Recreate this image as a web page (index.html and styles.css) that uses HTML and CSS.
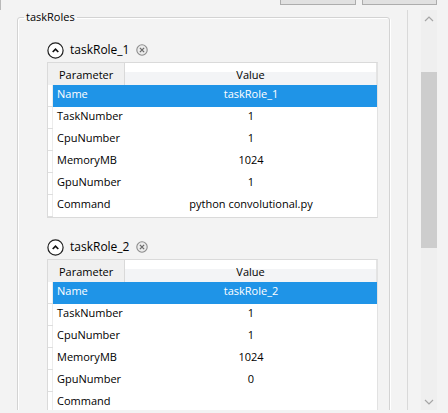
FILE: index.html
```html
<!DOCTYPE html>
<html>
<head>
<meta charset="utf-8">
<link rel="stylesheet" href="styles.css">
</head>
<body>
<div class="window">
  <div class="toolbar">
    <div class="btns">
      <button class="btn btn-import" aria-label="Import"></button>
      <button class="btn btn-export" aria-label="Export"></button>
    </div>
  </div>
  <div class="main">
    <div class="viewport">
      <fieldset class="group">
        <legend class="group-title">taskRoles</legend>

        <section class="role">
          <div class="role-head">
            <svg class="collapse" width="17" height="17" viewBox="0 0 17 17"><circle cx="8.5" cy="8.5" r="7.6" fill="#fff" stroke="#1e1e1e" stroke-width="1.2"/><path d="M5.7 10 L8.5 7.2 L11.3 10" fill="none" stroke="#111" stroke-width="1.7"/></svg>
            <span class="role-name">taskRole_1</span>
            <svg class="remove" width="12" height="12" viewBox="0 0 12 12"><circle cx="6" cy="6" r="5.2" fill="#ececec" stroke="#8c8c8c" stroke-width="1.1"/><path d="M3.9 3.9 L8.1 8.1 M8.1 3.9 L3.9 8.1" stroke="#6a6a6a" stroke-width="1.3"/></svg>
          </div>
          <table class="grid">
            <colgroup><col class="c-rh"><col class="c-param"><col class="c-value"></colgroup>
            <thead>
              <tr><th class="h-param" colspan="2">Parameter</th><th class="h-value">Value</th></tr>
            </thead>
            <tbody>
              <tr class="selected"><td class="rh"></td><td class="param">Name</td><td class="value">taskRole_1</td></tr>
              <tr><td class="rh"></td><td class="param">TaskNumber</td><td class="value">1</td></tr>
              <tr><td class="rh"></td><td class="param">CpuNumber</td><td class="value">1</td></tr>
              <tr><td class="rh"></td><td class="param">MemoryMB</td><td class="value">1024</td></tr>
              <tr><td class="rh"></td><td class="param">GpuNumber</td><td class="value">1</td></tr>
              <tr><td class="rh"></td><td class="param">Command</td><td class="value">python convolutional.py</td></tr>
            </tbody>
          </table>
        </section>

        <section class="role">
          <div class="role-head">
            <svg class="collapse" width="17" height="17" viewBox="0 0 17 17"><circle cx="8.5" cy="8.5" r="7.6" fill="#fff" stroke="#1e1e1e" stroke-width="1.2"/><path d="M5.7 10 L8.5 7.2 L11.3 10" fill="none" stroke="#111" stroke-width="1.7"/></svg>
            <span class="role-name">taskRole_2</span>
            <svg class="remove" width="12" height="12" viewBox="0 0 12 12"><circle cx="6" cy="6" r="5.2" fill="#ececec" stroke="#8c8c8c" stroke-width="1.1"/><path d="M3.9 3.9 L8.1 8.1 M8.1 3.9 L3.9 8.1" stroke="#6a6a6a" stroke-width="1.3"/></svg>
          </div>
          <table class="grid">
            <colgroup><col class="c-rh"><col class="c-param"><col class="c-value"></colgroup>
            <thead>
              <tr><th class="h-param" colspan="2">Parameter</th><th class="h-value">Value</th></tr>
            </thead>
            <tbody>
              <tr class="selected"><td class="rh"></td><td class="param">Name</td><td class="value">taskRole_2</td></tr>
              <tr><td class="rh"></td><td class="param">TaskNumber</td><td class="value">1</td></tr>
              <tr><td class="rh"></td><td class="param">CpuNumber</td><td class="value">1</td></tr>
              <tr><td class="rh"></td><td class="param">MemoryMB</td><td class="value">1024</td></tr>
              <tr><td class="rh"></td><td class="param">GpuNumber</td><td class="value">0</td></tr>
              <tr><td class="rh"></td><td class="param">Command</td><td class="value"></td></tr>
            </tbody>
          </table>
        </section>
      </fieldset>
    </div>
    <div class="scrollbar">
      <div class="sb-arrow">
        <svg width="10" height="6" viewBox="0 0 10 6"><path d="M1 5 L5 1 L9 5" fill="none" stroke="#a6a6a6" stroke-width="1.2"/></svg>
      </div>
      <div class="sb-track">
        <div class="sb-thumb"></div>
      </div>
      <div class="sb-arrow">
        <svg width="10" height="6" viewBox="0 0 10 6"><path d="M1 1 L5 5 L9 1" fill="none" stroke="#a6a6a6" stroke-width="1.2"/></svg>
      </div>
    </div>
  </div>
</div>
</body>
</html>
```

FILE: styles.css
```css
* { box-sizing: border-box; }

html, body {
  margin: 0;
  padding: 0;
}

body {
  background: #f3f3f3;
  font-family: "Open Sans", "Noto Sans", sans-serif;
  font-size: 11px;
  color: #000;
  width: 448px;
  height: 413px;
  overflow: hidden;
}

.window {
  display: flex;
  flex-direction: column;
  height: 413px;
}

.toolbar {
  height: 10px;
  border-left: 1px solid #b9b9b9;
  flex: none;
}

.btns {
  height: 5px;
  overflow: hidden;
  display: flex;
  align-items: flex-end;
  justify-content: flex-end;
  gap: 6px;
  padding-right: 11px;
}

.btn {
  flex: none;
  height: 23px;
  border: 1px solid #adadad;
  background: #e1e1e1;
  padding: 0;
  margin: 0;
}

.btn-import { width: 76px; }
.btn-export { width: 75px; }

.main {
  height: 400px;
  flex: none;
  display: flex;
}

.viewport {
  width: 408px;
  height: 400px;
  overflow: hidden;
  border-right: 1px solid #d9d9d9;
  flex: none;
}

.group {
  margin: 0 0 0 17px;
  width: 373px;
  padding: 18px 0 0 0;
  border: 1px solid #d3d3d3;
  border-radius: 3px;
  box-shadow: inset 1px 1px 0 #fff, 1px 1px 0 #fff;
  min-width: 0;
}

.group-title {
  margin-left: 6px;
  padding: 0 2px;
  line-height: 14px;
  font-size: 11px;
}

.role {
  padding-left: 29px;
  margin-bottom: 21px;
}

.role-head {
  display: flex;
  align-items: center;
  height: 16px;
  margin-bottom: 4px;
}

.collapse {
  display: block;
  flex: none;
}

.role-name {
  font-size: 12px;
  margin-left: 6px;
  line-height: 16px;
  color: #000;
}

.remove {
  display: block;
  margin-left: 7px;
  flex: none;
}

.grid {
  table-layout: fixed;
  border-collapse: separate;
  border-spacing: 0;
  width: 331px;
  background: #fff;
  border: 1px solid #dadada;
  border-right-color: #e2e2e2;
}

.c-rh { width: 5px; }
.c-param { width: 72px; }
.c-value { width: 252px; }

.grid th {
  height: 22px;
  font-weight: normal;
  padding: 0;
  white-space: nowrap;
}

.h-param {
  text-align: left;
  padding-left: 11px !important;
  background: #f0f0f0;
  border-right: 1px solid #d9d9d9;
}

.h-value {
  text-align: center;
  background: linear-gradient(#ffffff 0, #ffffff 9px, #f3f4f6 9px, #f3f4f6 100%);
  border-right: 1px solid #e4e4e4;
}

.grid td {
  height: 22px;
  padding: 1px 0 0 0;
  line-height: 15px;
  vertical-align: top;
  white-space: nowrap;
  overflow: hidden;
}

.rh {
  box-shadow: inset 0 -1px 0 #dedede, inset -1px 0 0 #ececec;
}

.param {
  padding-left: 4px !important;
}

.value {
  text-align: center;
}

.selected .param,
.selected .value {
  background: #1f94e7;
  color: #fff;
}

.scrollbar {
  margin-left: 13px;
  width: 16px;
  height: 400px;
  background: #efefef;
  display: flex;
  flex-direction: column;
  flex: none;
}

.sb-arrow {
  height: 17px;
  display: flex;
  align-items: center;
  justify-content: center;
  flex: none;
}

.sb-track {
  flex: 1;
  padding-top: 45px;
}

.sb-thumb {
  height: 176px;
  background: #cdcdcd;
}
```
